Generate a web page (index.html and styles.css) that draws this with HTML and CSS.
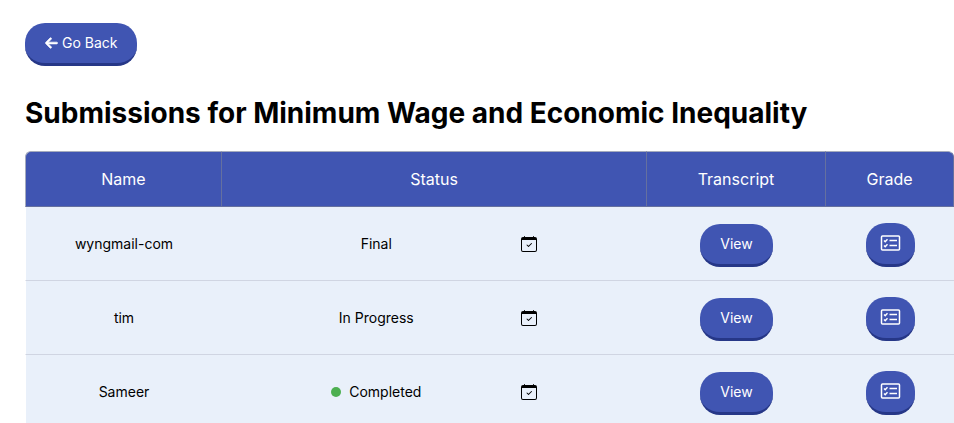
FILE: index.html
```html
<!DOCTYPE html>
<html lang="en">
  <head>
    <meta charset="UTF-8" />
    <meta name="viewport" content="width=device-width, initial-scale=1.0" />
    <title>Submissions</title>
    <link rel="stylesheet" href="styles.css">
  </head>
  <body>
    <!-- Shared icons -->
    <svg class="icon-defs" aria-hidden="true">
      <symbol id="icon-calendar" viewBox="0 0 16 16">
        <path d="M10.854 7.146a.5.5 0 0 1 0 .708l-3 3a.5.5 0 0 1-.708 0l-1.500-1.500a.5.5 0 1 1 .708-.708L7.500 9.793l2.646-2.647a.5.5 0 0 1 .708 0" />
        <path d="M3.500 0a.5.5 0 0 1 .5.5V1h8V.5a.5.5 0 0 1 1 0V1h1a2 2 0 0 1 2 2v11a2 2 0 0 1-2 2H2a2 2 0 0 1-2-2V3a2 2 0 0 1 2-2h1V.5a.5.5 0 0 1 .5-.5M1 4v10a1 1 0 0 0 1 1h12a1 1 0 0 0 1-1V4z" />
      </symbol>
      <symbol id="icon-grade" viewBox="0 0 20 16">
        <rect x="1" y="1" width="18" height="14" rx="1" fill="none" stroke="currentColor" stroke-width="1.500" />
        <path d="M3.500 5.500l1.200 1.200 2.300-2.500M3.500 10.500l1.200 1.200 2.300-2.500M9 5.500h7.500M9 10.500h7.500" fill="none" stroke="currentColor" stroke-width="1.400" />
      </symbol>
    </svg>

    <main class="page">
      <button type="button" class="btn">
        <svg class="arrow" viewBox="0 0 448 512" aria-hidden="true">
          <path d="M9.400 233.400c-12.500 12.500-12.500 32.800 0 45.300l160 160c12.500 12.500 32.800 12.500 45.300 0s12.500-32.800 0-45.300L109.200 288 416 288c17.700 0 32-14.300 32-32s-14.300-32-32-32l-306.700 0L214.600 118.600c12.500-12.500 12.500-32.800 0-45.300s-32.800-12.500-45.300 0l-160 160z" />
        </svg>
        Go Back
      </button>

      <h1>Submissions for Minimum Wage and Economic Inequality</h1>

      <table class="submissions">
        <colgroup>
          <col class="col-name" />
          <col />
          <col class="col-transcript" />
          <col class="col-grade" />
        </colgroup>
        <thead>
          <tr>
            <th>Name</th>
            <th>Status</th>
            <th>Transcript</th>
            <th>Grade</th>
          </tr>
        </thead>
        <tbody>
          <tr>
            <td>wyngmail-com</td>
            <td>
              <div class="status">
                <span class="status-text">Final</span>
                <svg class="calendar" role="img" aria-label="Due date"><use href="#icon-calendar" /></svg>
              </div>
            </td>
            <td class="action"><button type="button" class="btn">View</button></td>
            <td class="action">
              <button type="button" class="btn btn-grade" aria-label="Grade">
                <svg class="grade"><use href="#icon-grade" /></svg>
              </button>
            </td>
          </tr>
          <tr>
            <td>tim</td>
            <td>
              <div class="status">
                <span class="status-text">In Progress</span>
                <svg class="calendar" role="img" aria-label="Due date"><use href="#icon-calendar" /></svg>
              </div>
            </td>
            <td class="action"><button type="button" class="btn">View</button></td>
            <td class="action">
              <button type="button" class="btn btn-grade" aria-label="Grade">
                <svg class="grade"><use href="#icon-grade" /></svg>
              </button>
            </td>
          </tr>
          <tr>
            <td>Sameer</td>
            <td>
              <div class="status">
                <span class="status-text"><span class="dot"></span>Completed</span>
                <svg class="calendar" role="img" aria-label="Due date"><use href="#icon-calendar" /></svg>
              </div>
            </td>
            <td class="action"><button type="button" class="btn">View</button></td>
            <td class="action">
              <button type="button" class="btn btn-grade" aria-label="Grade">
                <svg class="grade"><use href="#icon-grade" /></svg>
              </button>
            </td>
          </tr>
        </tbody>
      </table>
    </main>
  </body>
</html>
```

FILE: styles.css
```css
:root {
  --primary: #4055b2;
  --primary-dark: #263787;
  --row: #e9f0fa;
  --row-line: #d0d5e2;
  --head-line: #65709f;
  --head-top: #a5abbd;
}

* {
  box-sizing: border-box;
  margin: 0;
  padding: 0;
}

body {
  background: #fff;
  color: #000;
  font-family: Inter, "Liberation Sans", sans-serif;
  font-size: 14px;
}

.icon-defs {
  display: none;
}

.page {
  padding: 23px 0 0 25px;
}

h1 {
  margin: 30px 0 20px;
  font-size: 28px;
  font-weight: 700;
  line-height: 35px;
}

.btn {
  display: inline-flex;
  align-items: center;
  justify-content: center;
  gap: 4px;
  height: 43px;
  padding: 0 20px 1px;
  border: none;
  border-bottom: 3px solid var(--primary-dark);
  border-radius: 20px;
  background: var(--primary);
  color: #fff;
  font-family: inherit;
  font-size: 14px;
  font-weight: 400;
  vertical-align: middle;
  cursor: pointer;
}

.btn-grade {
  height: 44px;
  padding: 0 14px 1px;
}

.arrow {
  width: 13px;
  height: 14px;
  fill: currentColor;
  stroke: currentColor;
  stroke-width: 24px;
}

.grade {
  width: 21px;
  height: 16px;
}

.submissions {
  width: 100%;
  table-layout: fixed;
  border-collapse: separate;
  border-spacing: 0;
  text-align: center;
}

.col-name {
  width: 197px;
}

.col-transcript {
  width: 179px;
}

.col-grade {
  width: 128px;
}

th {
  height: 56px;
  border-top: 1px solid var(--head-top);
  border-right: 1px solid var(--head-line);
  border-bottom: 1px solid var(--head-line);
  background: var(--primary);
  color: #fff;
  font-size: 16px;
  font-weight: 400;
}

th:first-child {
  border-left: 1px solid var(--head-top);
  border-top-left-radius: 6px;
}

th:last-child {
  border-top-right-radius: 6px;
}

td {
  height: 74px;
  border-bottom: 1px solid var(--row-line);
  background: var(--row);
}

td:first-child {
  border-left: 1px solid #fff;
}

.action {
  padding-top: 3px;
}

.status {
  display: grid;
  grid-template-columns: 5fr 2fr;
  align-items: center;
  gap: 5px;
  padding: 0 15px;
}

.status-text {
  display: flex;
  align-items: center;
  justify-content: center;
  gap: 8px;
}

.dot {
  width: 10px;
  height: 10px;
  border-radius: 50%;
  background: #4caf50;
}

.calendar {
  width: 16px;
  height: 16px;
}
```
